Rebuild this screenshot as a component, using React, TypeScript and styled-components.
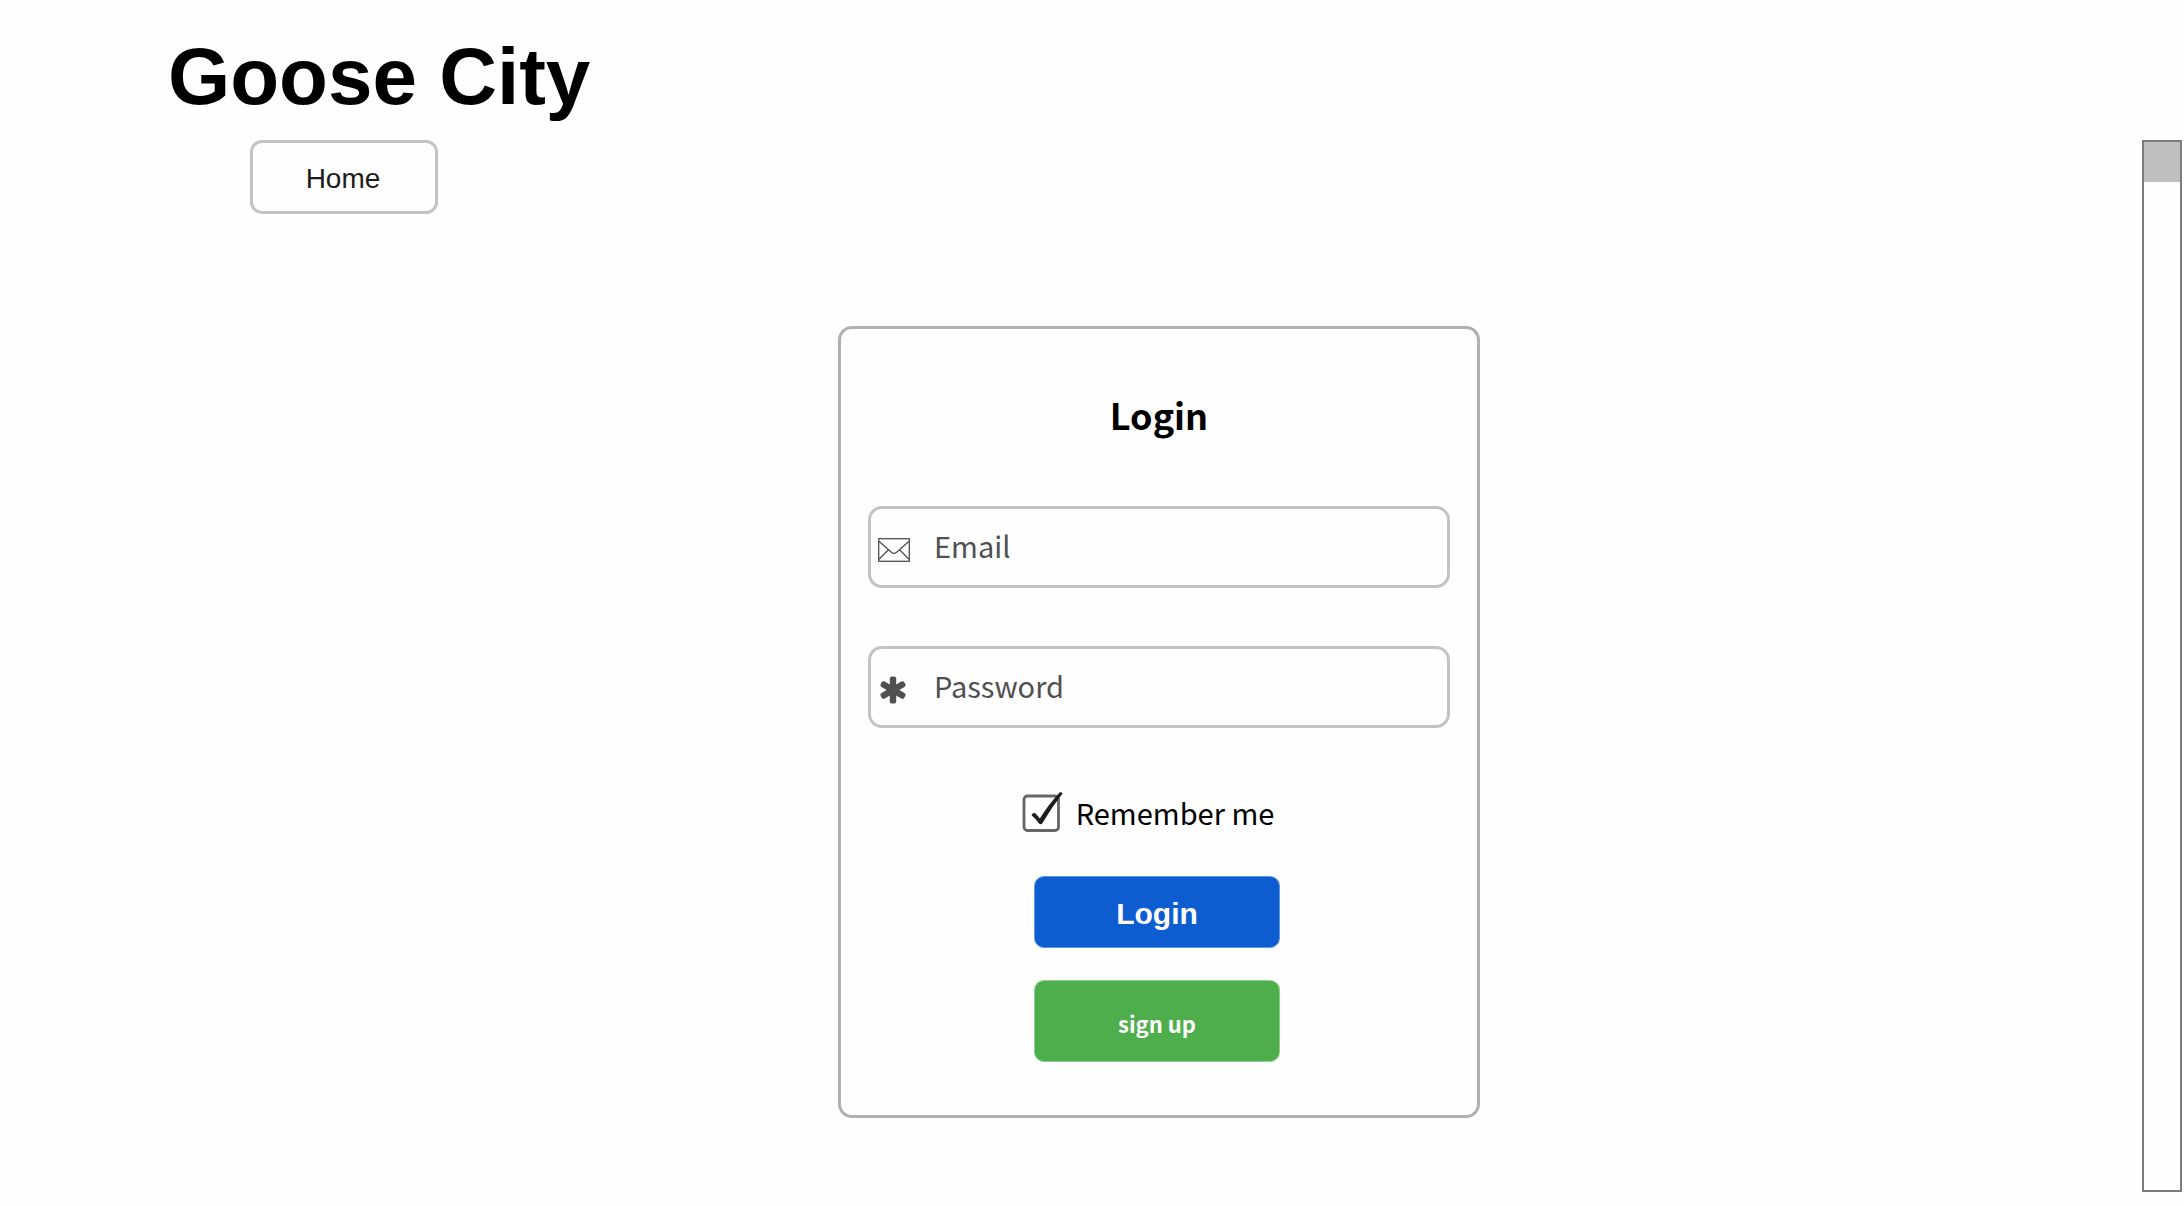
import React, { useState } from "react";
import styled, { createGlobalStyle } from "styled-components";

const sans = `"Liberation Sans", Arial, sans-serif`;
const humanist = `"Noto Sans CJK SC", "Noto Sans", sans-serif`;

const GlobalStyle = createGlobalStyle`
  *, *::before, *::after { box-sizing: border-box; }
  body { margin: 0; background: #fefefe; color: #000; font-family: ${humanist}; }
`;

const Page = styled.div`
  display: flex;
  flex-direction: column;
  gap: 17px;
  min-height: 100vh;
  padding: 31px 2px 14px 0;
`;

const Header = styled.header`
  padding-left: 168px;
`;

const SiteTitle = styled.h1`
  margin: 0;
  font: 700 80px/92px ${sans};
`;

const Body = styled.div`
  display: flex;
  flex: 1;
`;

const Content = styled.div`
  display: flex;
  flex: 1;
  flex-direction: column;
  gap: 112px;
`;

const Nav = styled.nav`
  display: flex;
  padding-left: 250px;
`;

const NavLink = styled.a`
  display: flex;
  align-items: center;
  justify-content: center;
  width: 188px;
  height: 74px;
  padding: 4px 2px 0 0;
  border: 3px solid #c3c3c3;
  border-radius: 12px;
  color: #1c1c1c;
  font: 400 28px/32px ${sans};
  text-decoration: none;
`;

const Main = styled.main`
  display: flex;
  justify-content: center;
  padding: 0 0 72px 176px;
`;

const Card = styled.form`
  display: flex;
  flex-direction: column;
  align-items: center;
  width: 100%;
  max-width: 642px;
  padding: 59px 27px 53px;
  border: 3px solid #b0b0b0;
  border-radius: 14px;
`;

const CardTitle = styled.h2`
  margin: 0 0 66px;
  font: 700 36px/52px ${humanist};
`;

const Fields = styled.div`
  display: flex;
  flex-direction: column;
  gap: 58px;
  width: 100%;
`;

const Field = styled.label`
  display: flex;
  align-items: center;
  gap: 24px;
  height: 82px;
  padding: 0 8px 0 7px;
  border: 3px solid #c3c3c3;
  border-radius: 14px;
  color: #505050;

  svg {
    flex: none;
    margin-top: 6px;
  }
`;

const FieldInput = styled.input`
  flex: 1;
  min-width: 0;
  padding: 0 0 4px;
  border: 0;
  outline: 0;
  background: transparent;
  color: inherit;
  font: 400 29px/44px ${humanist};

  &::placeholder {
    color: inherit;
    opacity: 1;
  }
`;

const Remember = styled.label`
  display: flex;
  align-items: center;
  gap: 12px;
  margin: 62px 22px 42px 0;
  font: 400 29px/44px ${humanist};
`;

const CheckArea = styled.span`
  position: relative;
  display: flex;
  width: 42px;
  height: 42px;
`;

const CheckInput = styled.input`
  position: absolute;
  inset: 0;
  width: 100%;
  height: 100%;
  margin: 0;
  opacity: 0;
`;

const Actions = styled.div`
  display: flex;
  flex-direction: column;
  gap: 32px;
  width: 246px;
  margin-right: 4px;
`;

const ActionButton = styled.button<{ $tone: "primary" | "success" }>`
  height: ${(p) => (p.$tone === "primary" ? 72 : 82)}px;
  padding: 4px 0 0;
  border: 1px solid ${(p) => (p.$tone === "primary" ? "#5b95e6" : "#8fd08d")};
  border-radius: 10px;
  background: ${(p) => (p.$tone === "primary" ? "#0d5dd1" : "#4eae4b")};
  color: #fff;
  font: ${(p) => (p.$tone === "primary" ? `700 30px/34px ${sans}` : `700 22px/34px ${humanist}`)};
`;

const ScrollTrack = styled.div`
  width: 40px;
  border: 2px solid #7c7c7c;
`;

const ScrollThumb = styled.div`
  height: 40px;
  background: #bfbfbf;
`;

const EnvelopeIcon = () => (
  <svg width="32" height="24" viewBox="0 0 32 24" fill="none" stroke="currentColor" strokeWidth="1.3" aria-hidden="true">
    <rect x="0.7" y="0.7" width="30.6" height="22.6" />
    <path d="M1 3.2 L13.4 14.2 Q16 16.4 18.6 14.2 L31 3.2 M1 21.2 L10.4 11.8 M31 21.2 L21.6 11.8" />
  </svg>
);

const AsteriskIcon = () => (
  <svg width="32" height="28" viewBox="-15 -14 32 28" fill="currentColor" aria-hidden="true">
    {[0, 60, 120].map((angle) => (
      <rect key={angle} x="-3.2" y="-13.6" width="6.4" height="27.2" rx="2.2" transform={`rotate(${angle})`} />
    ))}
  </svg>
);

const CheckIcon = ({ checked }: { checked: boolean }) => (
  <svg width="42" height="42" viewBox="0 0 42 42" fill="none" aria-hidden="true">
    <rect x="2" y="5" width="34.5" height="34.5" rx="3.5" stroke="#666" strokeWidth="2.8" />
    {checked && (
      <path
        d="M9.5 24.2 Q10.5 21.6 13 22 Q15.4 24.4 17.8 27.6 Q27 13 37.6 1.6 Q39.6 0.8 40.6 2.6 Q30 16 20.2 32.4 Q18.6 34 17 32.4 Q13.6 27.4 9.5 24.2 Z"
        fill="#1c1c1c"
      />
    )}
  </svg>
);

export default function App() {
  const [remember, setRemember] = useState(true);

  return (
    <>
      <GlobalStyle />
      <Page>
        <Header>
          <SiteTitle>Goose City</SiteTitle>
        </Header>
        <Body>
          <Content>
            <Nav>
              <NavLink href="#home">Home</NavLink>
            </Nav>
            <Main>
              <Card onSubmit={(event) => event.preventDefault()}>
                <CardTitle>Login</CardTitle>
                <Fields>
                  <Field>
                    <EnvelopeIcon />
                    <FieldInput type="email" placeholder="Email" aria-label="Email" />
                  </Field>
                  <Field>
                    <AsteriskIcon />
                    <FieldInput type="password" placeholder="Password" aria-label="Password" />
                  </Field>
                </Fields>
                <Remember>
                  <CheckArea>
                    <CheckIcon checked={remember} />
                    <CheckInput type="checkbox" checked={remember} onChange={(event) => setRemember(event.target.checked)} />
                  </CheckArea>
                  Remember me
                </Remember>
                <Actions>
                  <ActionButton $tone="primary" type="submit">Login</ActionButton>
                  <ActionButton $tone="success" type="button">sign up</ActionButton>
                </Actions>
              </Card>
            </Main>
          </Content>
          <ScrollTrack>
            <ScrollThumb />
          </ScrollTrack>
        </Body>
      </Page>
    </>
  );
}
